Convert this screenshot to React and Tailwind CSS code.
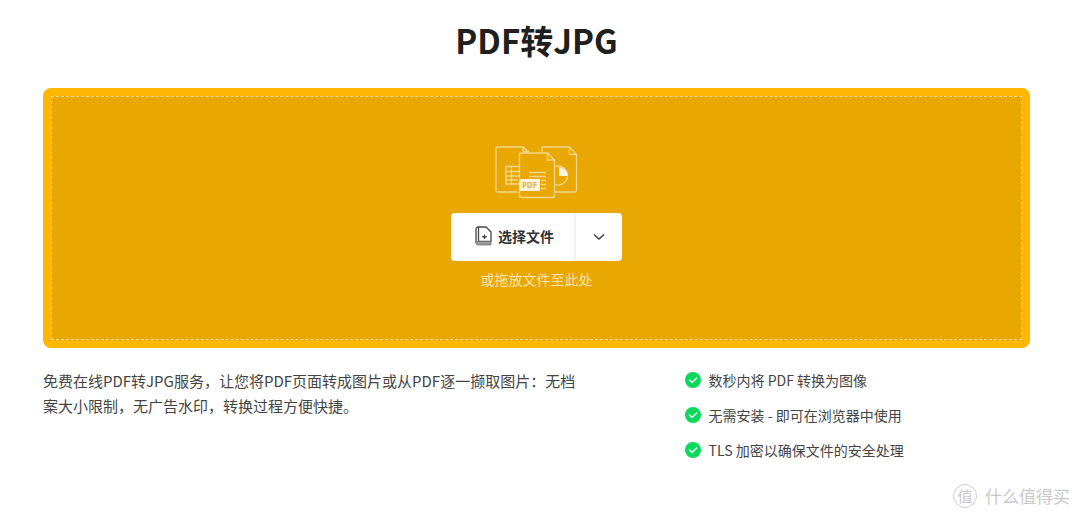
const features = [
  '数秒内将 PDF 转换为图像',
  '无需安装 - 即可在浏览器中使用',
  'TLS 加密以确保文件的安全处理',
];

function DocumentsArt() {
  return (
    <svg width="84" height="54" viewBox="1 0 84 54" fill="none" stroke="#f3d68b" strokeWidth="1.3" aria-hidden="true">
      <path d="M24 47H3.500Q2 47 2 45.500V3.500Q2 2 3.500 2H29L35 7.500M29 2V6.500H35" />
      <path d="M26 21.500H12V39H26M12 26.500H26M12 31H26M12 35H24M17.500 21.500V39" />
      <path d="M48 7V2H75.500L82.500 9.500V45.500Q82.500 47 81 47H61M75.500 2V9.500H82.500" />
      <path d="M61 21.500A9.500 9.500 0 1 1 61 39.500" />
      <path d="M65 22V31H73.500A9 9 0 0 0 65 22Z" fill="#fbf3dc" stroke="none" />
      <path d="M25.500 33V9.500Q25.500 8 27 8H53.500L60.500 15V50.500Q60.500 52.500 58.500 52.500H27.500Q25.500 52.500 25.500 50.500V46M53.500 8V15H60.500" />
      <path d="M35 27.500H52M35 31.500H52M47 35.500H52M47 39.500H52M47 43.500H52" />
      <rect x="25" y="34" width="21" height="12" rx="1" fill="#fbf3dc" stroke="none" />
      <text x="35.500" y="43" textAnchor="middle" fontSize="8" fontWeight="700" fill="#e3b545" stroke="none" fontFamily="Noto Sans, sans-serif">PDF</text>
    </svg>
  );
}

function FileIcon() {
  return (
    <svg width="17" height="20" viewBox="0 0 17 20" fill="none" stroke="#444" strokeWidth="1.3" aria-hidden="true">
      <path d="M3.500 1H11L16 6V15.500H3.500Z" strokeLinejoin="round" />
      <path d="M3.500 1Q1 1 1 3.500V17" />
      <path d="M1 17Q1 15.500 3 15.500H16V19H3Q1 19 1 17Z" fill="#999" stroke="#777" strokeWidth="0.8" />
      <path d="M9.500 8.500V13M7.250 10.750H11.750" />
    </svg>
  );
}

function CheckIcon() {
  return (
    <svg width="16" height="16" viewBox="0 0 16 16" className="shrink-0" aria-hidden="true">
      <circle cx="8" cy="8" r="8" fill="#07d95a" />
      <path d="M4.500 8L7 10.500L11.700 6" fill="none" stroke="#fff" strokeWidth="1.5" strokeLinecap="round" strokeLinejoin="round" />
    </svg>
  );
}

export default function App() {
  return (
    <div className="bg-white font-['Noto_Sans_CJK_SC',sans-serif] text-[#444]">
      <main className="pr-[50px] pl-[43px]">
        <h1 className="pt-3.5 text-center text-[33px] leading-[52px] font-bold text-[#202020]">PDF转JPG</h1>

        <section className="mt-[22px] rounded-lg bg-[#ffb703] p-2">
          <div className="flex flex-col items-center border border-dashed border-[#f8dc91] bg-[#e8a703] pt-12 pb-[50px]">
            <DocumentsArt />
            <div className="mt-3.5 flex h-12 rounded-sm bg-white text-[#333]">
              <button type="button" className="flex items-center gap-1.5 pr-5 pb-0.5 pl-6 text-sm font-bold">
                <FileIcon />
                选择文件
              </button>
              <button type="button" aria-label="更多来源" className="flex w-12 items-center justify-center border-l-2 border-[#f2f2f2]">
                <svg width="12" height="8" viewBox="0 0 12 8" fill="none" stroke="#444" strokeWidth="1.6" aria-hidden="true">
                  <path d="M1 1.500L6 6L11 1.500" />
                </svg>
              </button>
            </div>
            <p className="mt-2 text-sm leading-5 text-[#f8e5b5]">或拖放文件至此处</p>
          </div>
        </section>

        <div className="grid grid-cols-[13fr_7fr] pt-5">
          <p className="pr-25 text-[15px] leading-[25px]">
            免费在线PDF转JPG服务，让您将PDF页面转成图片或从PDF逐一撷取图片：无档案大小限制，无广告水印，转换过程方便快捷。
          </p>
          <ul className="flex flex-col gap-[15px] pt-0.5 text-sm leading-5">
            {features.map((text) => (
              <li key={text} className="flex items-center gap-2">
                <CheckIcon />
                {text}
              </li>
            ))}
          </ul>
        </div>
      </main>

      <footer className="flex items-center justify-end gap-2 pt-6 pr-2.5 text-[17px] leading-6 text-[#c9c9c9]">
        <span className="flex size-6 items-center justify-center rounded-full border border-[#d0d0d0] text-[15px] leading-5">
          值
        </span>
        什么值得买
      </footer>
    </div>
  );
}
